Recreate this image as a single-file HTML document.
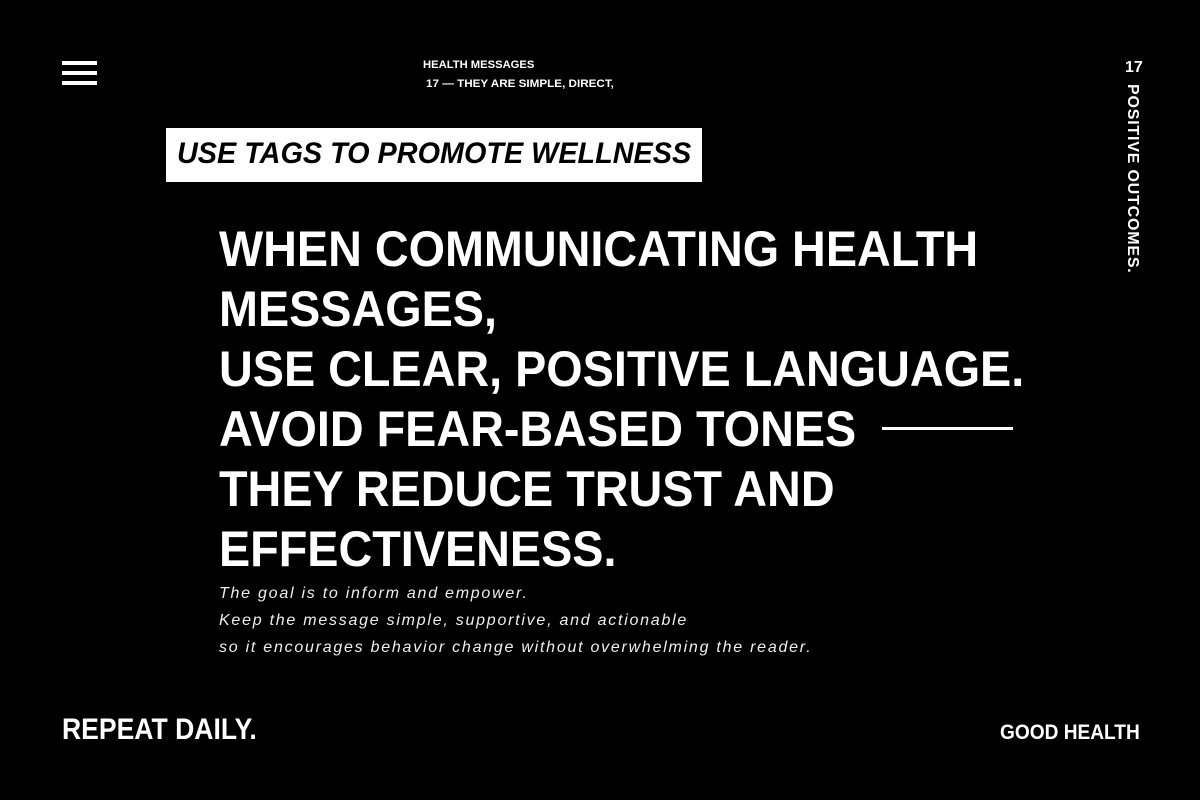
<!DOCTYPE html>
<html><head><meta charset="utf-8"><style>
body{margin:0;width:1200px;height:800px;background:#000;color:#fff;font-family:"Liberation Sans",sans-serif;position:relative;overflow:hidden}
.a{position:absolute}
.bar{position:absolute;left:62px;width:35px;height:4px;background:#fff}
.sq{transform:scaleX(.84);transform-origin:left top;white-space:nowrap;font-weight:bold}
</style></head><body>
<div class="bar" style="top:61px"></div><div class="bar" style="top:71px"></div><div class="bar" style="top:81px"></div>
<div class="a sq" style="left:423px;top:59px;font-size:11px;transform:scaleX(1.02)">HEALTH MESSAGES</div>
<div class="a sq" style="left:426px;top:78px;font-size:11px;transform:scaleX(1.06)">17 — THEY ARE SIMPLE, DIRECT,</div>
<div class="a" style="left:166px;top:128px;width:536px;height:54px;background:#fff"></div>
<div class="a sq" style="left:177px;top:137px;font-size:30px;color:#000;font-style:italic;transform:scaleX(.96)">USE TAGS TO PROMOTE WELLNESS</div>
<div class="a sq" style="left:219px;top:219px;font-size:50px;line-height:60px;transform:scaleX(.935)">WHEN COMMUNICATING HEALTH<br>MESSAGES,<br>USE CLEAR, POSITIVE LANGUAGE.<br>AVOID FEAR-BASED TONES<br>THEY REDUCE TRUST AND<br>EFFECTIVENESS.</div>
<div class="a" style="left:882px;top:427px;width:131px;height:3px;background:#fff"></div>
<div class="a" style="left:219px;top:580px;font-size:16px;line-height:27px;font-style:italic;color:#eee;letter-spacing:1.75px;white-space:nowrap">The goal is to inform and empower.<br>Keep the message simple, supportive, and actionable<br>so it encourages behavior change without overwhelming the reader.</div>
<div class="a sq" style="left:62px;top:713px;font-size:30px;transform:scaleX(.885)">REPEAT DAILY.</div>
<div class="a sq" style="left:1000px;top:721px;font-size:21px;transform:scaleX(.91)">GOOD HEALTH</div>
<div class="a" style="left:1125px;top:59px;font-size:16px;font-weight:bold">17</div>
<div class="a" style="left:1123px;top:84px;font-size:16px;font-weight:bold;writing-mode:vertical-rl;white-space:nowrap;letter-spacing:.8px">POSITIVE OUTCOMES.</div>
</body></html>
